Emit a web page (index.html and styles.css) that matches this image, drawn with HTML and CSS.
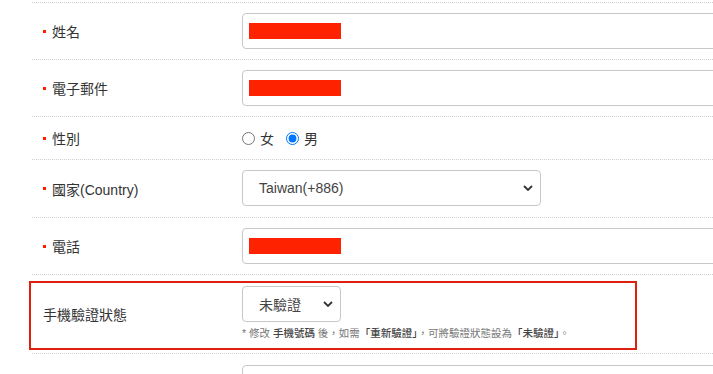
FILE: index.html
```
<!DOCTYPE html>
<html lang="zh-TW">

<head>
  <meta charset="UTF-8">
  <title>會員資料</title>
  <link rel="stylesheet" href="styles.css">
</head>

<body>
  <div class="form">
    <div class="row">
      <div class="label"><span class="req"></span>姓名</div>
      <div class="value">
        <div class="field"><span class="redact"></span></div>
      </div>
    </div>
    <div class="row">
      <div class="label"><span class="req"></span>電子郵件</div>
      <div class="value">
        <div class="field"><span class="redact"></span></div>
      </div>
    </div>
    <div class="row row-short">
      <div class="label"><span class="req"></span>性別</div>
      <div class="value radios">
        <label class="radio"><input type="radio" name="sex">女</label>
        <label class="radio"><input type="radio" name="sex" checked>男</label>
      </div>
    </div>
    <div class="row row-country">
      <div class="label"><span class="req"></span>國家(Country)</div>
      <div class="value">
        <div class="select select-wide">
          <span>Taiwan(+886)</span>
          <svg width="10" height="6" viewBox="0 0 10 6"><path d="M1 1 L5 5 L9 1" fill="none" stroke="#333" stroke-width="1.8"/></svg>
        </div>
      </div>
    </div>
    <div class="row">
      <div class="label"><span class="req"></span>電話</div>
      <div class="value">
        <div class="field"><span class="redact"></span></div>
      </div>
    </div>
    <div class="row row-verify">
      <div class="label">手機驗證狀態</div>
      <div class="value">
        <div class="select select-small">
          <span>未驗證</span>
          <svg width="10" height="6" viewBox="0 0 10 6"><path d="M1 1 L5 5 L9 1" fill="none" stroke="#333" stroke-width="1.8"/></svg>
        </div>
        <p class="hint">* 修改 <b>手機號碼</b> 後，如需<b>「重新驗證」</b>，可將驗證狀態設為<b>「未驗證」</b>。</p>
      </div>
      <div class="mark"></div>
    </div>
    <div class="row">
      <div class="label"></div>
      <div class="value">
        <div class="field"></div>
      </div>
    </div>
  </div>
</body>

</html>
```

FILE: styles.css
```
html {
  overflow: hidden;
}

body {
  margin: 0;
  font-family: "Liberation Sans", "Noto Sans CJK TC", sans-serif;
  font-size: 14px;
  color: #333;
}

.form {
  margin: 2px 0 0 32px;
  border-top: 1px dotted #cfcfcf;
}

.row {
  display: flex;
  align-items: center;
  border-bottom: 1px dotted #cfcfcf;
  position: relative;
}

.label {
  width: 189px;
  flex-shrink: 0;
  padding-left: 11px;
  display: flex;
  align-items: center;
}

.req {
  width: 3px;
  height: 3px;
  background-color: #ff1a00;
  margin-right: 6px;
}

.value {
  flex: 1;
  padding: 10px 0 10px 10px;
}

.field {
  width: 560px;
  height: 34px;
  border: 1px solid #c8c8c8;
  border-radius: 4px;
  display: flex;
  align-items: center;
  padding-left: 6px;
}

.redact {
  display: inline-block;
  width: 92px;
  height: 16px;
  background-color: #ff2200;
}

.row-short .value {
  padding: 0 0 0 10px;
  height: 42px;
  display: flex;
  align-items: center;
}

.radio {
  display: flex;
  align-items: center;
  margin-right: 12px;
}

.radio input {
  margin: 0 5px 0 0;
  width: 13px;
  height: 13px;
}

.row-country .value {
  padding-bottom: 11px;
}

.select {
  height: 34px;
  border: 1px solid #c8c8c8;
  border-radius: 4px;
  display: flex;
  align-items: center;
  justify-content: space-between;
  padding: 0 7px 0 16px;
  color: #444;
}

.select-wide {
  width: 274px;
}

.select-small {
  width: 74px;
}

.row-verify .value {
  padding: 11px 0 13px 10px;
}

.hint {
  margin: 4px 0 0;
  font-size: 10.5px;
  line-height: 14px;
  color: #777;
}

.hint b {
  color: #444;
  font-weight: 500;
}

.mark {
  position: absolute;
  left: -3px;
  top: 6px;
  width: 604px;
  height: 65px;
  border: 2px solid #e0200f;
}

.row:last-child .value {
  padding-top: 11px;
}
```
